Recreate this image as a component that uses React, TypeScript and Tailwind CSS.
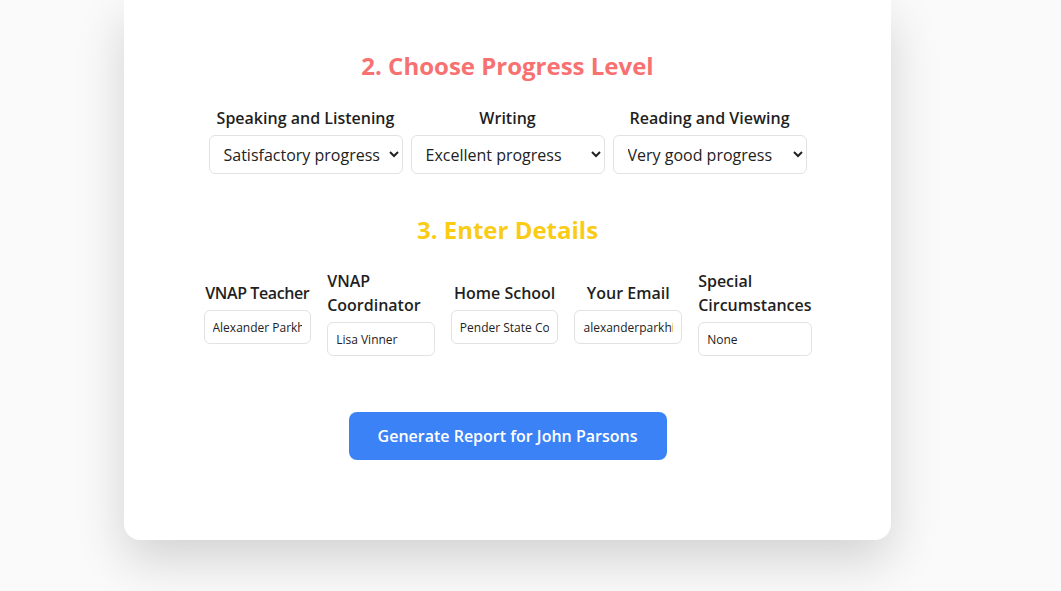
import React from "react";

const font = { fontFamily: "'Open Sans', Lato, sans-serif" };

function Field({ label, value, tight }: { label: string; value: string; tight?: boolean }) {
  return (
    <div className="flex flex-1 flex-col items-center">
      <label
        className={
          tight
            ? "mb-[5px] whitespace-nowrap text-[16px] font-semibold leading-6 tracking-[-0.4px] text-[#1f1f1f]"
            : "mb-[5px] text-[16px] font-semibold leading-6 text-[#1f1f1f]"
        }
      >
        {label}
      </label>
      <input
        readOnly
        value={value}
        className="h-[34px] w-full rounded-[6px] border border-[#e2e2e2] bg-white px-2 text-[12px] text-[#222] outline-none"
      />
    </div>
  );
}

function Pick({ label, value, options }: { label: string; value: string; options: string[] }) {
  return (
    <div className="flex w-[194px] flex-col items-center">
      <label className="mb-[5px] text-[16px] font-semibold leading-6 text-[#1f1f1f]">{label}</label>
      <select
        defaultValue={value}
        className="h-[39px] w-full rounded-[6px] border border-[#e2e2e2] bg-white pl-[10px] pr-1 text-[16px] text-[#222] outline-none"
      >
        {options.map((o) => (
          <option key={o}>{o}</option>
        ))}
      </select>
    </div>
  );
}

export default function App() {
  const opts = ["Excellent progress", "Very good progress", "Good progress", "Satisfactory progress", "Limited progress"];
  return (
    <div className="min-h-[591px] w-full bg-[#fafafa]" style={font}>
      <div className="ml-[124px] w-[767px] rounded-b-[16px] bg-white pb-[80px] pt-[48px] shadow-[0_20px_50px_rgba(0,0,0,0.16)]">
        <h2 className="text-center text-[24px] font-bold leading-9 text-[#f87171]">2. Choose Progress Level</h2>
        <div className="mt-[22px] flex justify-center gap-2">
          <Pick label="Speaking and Listening" value="Satisfactory progress" options={opts} />
          <Pick label="Writing" value="Excellent progress" options={opts} />
          <Pick label="Reading and Viewing" value="Very good progress" options={opts} />
        </div>
        <h2 className="mt-[38px] text-center text-[24px] font-bold leading-9 text-[#facc15]">3. Enter Details</h2>
        <div className="mx-auto mt-[21px] flex w-[608px] items-center gap-4">
          <Field label="VNAP Teacher" value="Alexander Parkhill" tight />
          <Field label="VNAP Coordinator" value="Lisa Vinner" />
          <Field label="Home School" value="Pender State College" />
          <Field label="Your Email" value="alexanderparkhill@school.edu" />
          <Field label="Special Circumstances" value="None" />
        </div>
        <div className="mt-[56px] flex justify-center">
          <button className="h-[48px] w-[318px] rounded-[8px] bg-[#3b82f6] text-[16px] font-semibold text-white">
            Generate Report for John Parsons
          </button>
        </div>
      </div>
    </div>
  );
}
